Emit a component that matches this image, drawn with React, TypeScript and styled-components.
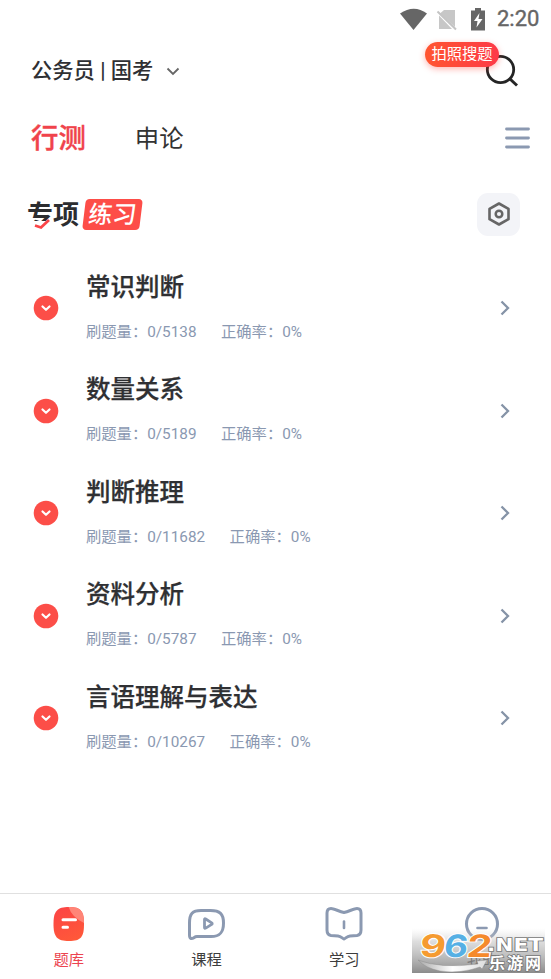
import React from 'react';
import styled, { createGlobalStyle } from 'styled-components';

const GlobalStyle = createGlobalStyle`
  * { box-sizing: border-box; }
  body { margin: 0; background: #fff; overflow: hidden; }
`;

const Screen = styled.div`
  position: relative;
  display: flex;
  flex-direction: column;
  width: 551px;
  height: 979px;
  background: #fff;
  color: #2f3033;
  font-family: Roboto, 'Noto Sans CJK SC', sans-serif;
  white-space: nowrap;
  svg { display: block; flex: none; }
`;

const StatusBar = styled.div`
  display: flex;
  align-items: center;
  justify-content: flex-end;
  height: 37px;
  padding-right: 12px;
`;

const Clock = styled.span`
  margin-left: 11px;
  padding-top: 1px;
  font-size: 22px;
  line-height: 36px;
  font-weight: 400;
  -webkit-text-stroke: 0.4px #666;
  color: #666;
  width: 42px;
`;

const Header = styled.header`
  display: flex;
  align-items: center;
  height: 67px;
  padding: 0 32px 0 31px;
`;

const ExamPicker = styled.div`
  display: flex;
  align-items: center;
  gap: 13px;
  padding-top: 1px;
  font-size: 21.3px;
  line-height: 30px;
  font-weight: 500;
`;

const SearchBox = styled.div`
  position: relative;
  margin-left: auto;
`;

const SearchTag = styled.span`
  position: absolute;
  right: 20px;
  top: -11px;
  width: 74px;
  height: 25px;
  border-radius: 13px;
  background: linear-gradient(90deg, #ff5530, #fd3a48);
  box-shadow: 0 2px 6px rgba(255, 70, 60, 0.4);
  color: #fff;
  font-size: 15.3px;
  line-height: 24px;
  text-align: center;
`;

const Tabs = styled.nav`
  display: flex;
  align-items: center;
  height: 68px;
  padding: 0 21px 0 31px;
  gap: 49px;
  svg { margin-left: auto; }
`;

const Tab = styled.span<{ $active?: boolean }>`
  padding-top: 2px;
  font-size: ${p => (p.$active ? 27.4 : 24.4)}px;
  line-height: 38px;
  font-weight: ${p => (p.$active ? 500 : 400)};
  -webkit-text-stroke: ${p => (p.$active ? '0.4px #f0434b' : '0')};
  color: ${p => (p.$active ? '#f0434b' : '#333')};
`;

const SectionHeader = styled.div`
  display: flex;
  align-items: center;
  height: 84px;
  padding: 0 31px 0 27px;
`;

const SectionTitle = styled.div`
  position: relative;
  padding-top: 2px;
  font-size: 26px;
  line-height: 34px;
  font-weight: 700;
  color: #2c2d30;
`;

const TitleAccent = styled.svg`
  position: absolute;
  left: 5px;
  top: 22px;
`;

const PracticeBadge = styled.div`
  display: grid;
  place-items: center;
  width: 57px;
  height: 31px;
  margin-left: 5px;
  border-radius: 4px;
  background: #fd4d48;
  transform: skewX(-7deg);
  color: #fff;
  font-size: 24px;
  line-height: 33px;
  font-weight: 500;
`;

const SettingsButton = styled.button`
  display: grid;
  place-items: center;
  width: 43px;
  height: 43px;
  margin-left: auto;
  padding: 0;
  border: 0;
  border-radius: 11px;
  background: #f3f4f8;
`;

const TopicList = styled.main`
  display: grid;
  grid-auto-rows: 102.5px;
  flex: 1;
  align-content: start;
`;

const TopicRow = styled.div`
  display: flex;
  align-items: center;
  padding: 2px 40px 0 33px;
`;

const TopicText = styled.div`
  flex: 1;
  margin-left: 27px;
  padding-bottom: 5px;
`;

const TopicName = styled.div`
  font-size: 24.5px;
  line-height: 36px;
  font-weight: 500;
  -webkit-text-stroke: 0.25px #2f3033;
`;

const TopicStats = styled.div`
  display: flex;
  gap: 24.5px;
  margin-top: 16px;
  font-size: 15.3px;
  line-height: 20px;
  color: #8a98b1;
`;

const BottomNav = styled.nav`
  display: grid;
  grid-template-columns: repeat(4, 1fr);
  height: 86px;
  border-top: 1px solid #e0e0e0;
`;

const NavItem = styled.div<{ $active?: boolean }>`
  display: flex;
  flex-direction: column;
  align-items: center;
  padding-top: 10px;
  gap: 5px;
  font-size: 15.3px;
  line-height: 22px;
  color: ${p => (p.$active ? '#ec4450' : '#3d3d3d')};
`;

const Watermark = styled.svg`
  position: absolute;
  left: 412px;
  top: 926px;
`;

const topics = [
  { name: '常识判断', total: 5138 },
  { name: '数量关系', total: 5189 },
  { name: '判断推理', total: 11682 },
  { name: '资料分析', total: 5787 },
  { name: '言语理解与表达', total: 10267 },
];

const StatusIcons = () => (
  <svg width="86" height="24" viewBox="0 0 86 24">
    <path d="M0 6.5Q14 -3 27 6.5L13.5 23Z" fill="#666" />
    <path d="M44 3h11v17L40 6.5zM39 8.5 52 22H39z" fill="#c7c7c7" />
    <path d="M37.5 4.5 56 22.5" stroke="#c4c4c4" strokeWidth="2" />
    <path d="M75 1h6v2.500h4V23.500H71V3.500h4z" fill="#666" />
    <path d="M79.500 6 74 14h3.500L76.500 20.500l6-8.500h-4z" fill="#fff" />
  </svg>
);

const CircleChevron = () => (
  <svg width="26" height="26" viewBox="0 0 26 26">
    <circle cx="13" cy="13" r="12.300" fill="#fc4e48" />
    <path d="m9.500 11.500 3.500 3.300 3.500-3.300" fill="none" stroke="#fff" strokeWidth="2.200" strokeLinecap="round" strokeLinejoin="round" />
  </svg>
);

const line = { fill: 'none', stroke: '#8b99b1', strokeWidth: 3, strokeLinecap: 'round', strokeLinejoin: 'round' } as const;

const BankIcon = () => (
  <svg width="40" height="40" viewBox="0 0 40 40">
    <defs>
      <linearGradient id="bank" x2="0.4" y2="1">
        <stop stopColor="#fb4147" />
        <stop offset="1" stopColor="#ff5839" />
      </linearGradient>
      <clipPath id="bankShape"><path d="M20 3C32 3 35 7 35 20S32 37 20 37 4.500 33 4.500 20 8 3 20 3Z" /></clipPath>
    </defs>
    <g clipPath="url(#bankShape)">
      <path d="M0 0h40v40H0z" fill="url(#bank)" />
      <path d="M19 0Q21 14 40 21V0Z" fill="#ff8577" />
    </g>
    <path d="M14 15.700h12.500M14 23.200h4.500" stroke="#fff" strokeWidth="3" strokeLinecap="round" />
  </svg>
);

const CourseIcon = () => (
  <svg width="40" height="40" viewBox="0 0 40 40">
    <path {...line} d="M14 6.500h9.500C33 6.500 36.500 10 36.500 19S33.500 32.500 24 32.500H10C7 32.500 6.500 35 4 34.500 2.500 34 2.500 33 2.500 31V19C2.500 9.500 5.500 6.500 14 6.500Z" />
    <path {...line} strokeWidth="2.800" d="M17.500 15.500v8q0 1.200 1.200.6l6-3.700q1-.8 0-1.500l-6-3.900q-1.200-.7-1.200.5Z" />
  </svg>
);

const StudyIcon = () => (
  <svg width="40" height="40" viewBox="0 0 40 40">
    <path {...line} d="M20 8.500C15 7.500 10 4.500 7 4.500 4 4.500 3 6 3 9V26C3 29 4 31 7 31.500L14 32C17 32.300 18 34 20 35 22 34 23 32.300 26 32L33 31.500C36 31 37 29 37 26V9C37 6 36 4.500 33 4.500 30 4.500 25 7.500 20 8.500Z" />
    <path {...line} strokeWidth="2.600" d="M20 17.500v6.500" />
  </svg>
);

const ProfileIcon = () => (
  <svg width="40" height="40" viewBox="0 0 40 40">
    <circle {...line} cx="20" cy="20" r="15.500" />
    <path {...line} strokeWidth="2.600" d="M15.500 24h9" />
  </svg>
);

const navItems = [
  { label: '题库', Icon: BankIcon, active: true },
  { label: '课程', Icon: CourseIcon },
  { label: '学习', Icon: StudyIcon },
  { label: '我的', Icon: ProfileIcon },
];

const SiteMark = () => (
  <Watermark width="135" height="48" viewBox="0 0 135 48">
    <defs>
      <linearGradient id="shade" x2="0" y2="1">
        <stop stopColor="#ddd" stopOpacity="0" />
        <stop offset="0.3" stopColor="#bbb" stopOpacity="0.5" />
        <stop offset="1" stopColor="#777" stopOpacity="0.85" />
      </linearGradient>
      <linearGradient id="swoosh"><stop stopColor="#aaa" /><stop offset="0.5" stopColor="#fff" /><stop offset="1" stopColor="#ddd" /></linearGradient>
    </defs>
    <path d="M0 2h133v45H0z" fill="url(#shade)" />
    <path d="M6 34Q28 43 66 38L65 35 75 34 70 43 68 41Q48 48 28 45 13 42 6 34Z" fill="url(#swoosh)" stroke="#888" strokeWidth=".4" />
    <g fontFamily="Inter" fontWeight="700" fontSize="31" stroke="#fff" strokeWidth="2" paintOrder="stroke" transform="translate(7 30.500) skewX(-6)">
      <text x="0" y="0" textLength="26" lengthAdjust="spacingAndGlyphs" fill="#f59b31">9</text>
      <text x="24" y="0" textLength="24" lengthAdjust="spacingAndGlyphs" fill="#56b0e4">6</text>
      <text x="47" y="0" textLength="25" lengthAdjust="spacingAndGlyphs" fill="#f58a2c">2</text>
    </g>
    <g fill="#fff" stroke="#777" strokeWidth="1.600" paintOrder="stroke" fontWeight="700">
      <text x="75" y="25" fontFamily="DejaVu Sans" fontSize="18" textLength="56" lengthAdjust="spacingAndGlyphs">.NET</text>
      <text x="77" y="43" fontFamily="Noto Sans CJK SC" fontSize="16" textLength="52">乐游网</text>
    </g>
  </Watermark>
);

export default function App() {
  return (
    <Screen>
      <GlobalStyle />
      <StatusBar>
        <StatusIcons />
        <Clock>2:20</Clock>
      </StatusBar>
      <Header>
        <ExamPicker>
          公务员 | 国考
          <svg width="14" height="9" viewBox="0 0 14 9">
            <path d="m1.500 1.500 5.500 5.500 5.500-5.500" fill="none" stroke="#666" strokeWidth="1.800" />
          </svg>
        </ExamPicker>
        <SearchBox>
          <svg width="36" height="36" viewBox="0 0 36 36">
            <circle cx="17.500" cy="16.500" r="13.200" fill="none" stroke="#252525" strokeWidth="2.800" />
            <path d="m27 26 7 6.500" stroke="#252525" strokeWidth="3" />
          </svg>
          <SearchTag>拍照搜题</SearchTag>
        </SearchBox>
      </Header>
      <Tabs>
        <Tab $active>行测</Tab>
        <Tab>申论</Tab>
        <svg width="25" height="24" viewBox="0 0 25 24">
          <path d="M1.500 3h22M1.500 12h22M1.500 21h22" {...line} strokeWidth="2.800" />
        </svg>
      </Tabs>
      <SectionHeader>
        <SectionTitle>
          专项
          <TitleAccent width="20" height="13" viewBox="0 0 20 13">
            <path d="M0 3h19v10H0z" fill="#fff" />
            <path d="M17 2 9 9.500 3 7.500" stroke="#fb4548" strokeWidth="2.800" fill="none" />
          </TitleAccent>
        </SectionTitle>
        <PracticeBadge>练习</PracticeBadge>
        <SettingsButton aria-label="设置">
          <svg width="24" height="26" viewBox="0 0 24 26">
            <path d="M12 2.500 21.500 7.800v10.400L12 23.500 2.500 18.200V7.800Z" fill="none" stroke="#666" strokeWidth="2.600" strokeLinejoin="round" />
            <circle cx="12" cy="13" r="3.300" fill="none" stroke="#666" strokeWidth="2.500" />
          </svg>
        </SettingsButton>
      </SectionHeader>
      <TopicList>
        {topics.map(t => (
          <TopicRow key={t.name}>
            <CircleChevron />
            <TopicText>
              <TopicName>{t.name}</TopicName>
              <TopicStats>
                <span>刷题量：0/{t.total}</span>
                <span>正确率：0%</span>
              </TopicStats>
            </TopicText>
            <svg width="12" height="18" viewBox="0 0 12 18">
              <path d="m2.500 2.500 6.500 6.500-6.500 6.500" fill="none" stroke="#8593a7" strokeWidth="2.300" />
            </svg>
          </TopicRow>
        ))}
      </TopicList>
      <BottomNav>
        {navItems.map(({ label, Icon, active }) => (
          <NavItem key={label} $active={active}>
            <Icon />
            {label}
          </NavItem>
        ))}
      </BottomNav>
      <SiteMark />
    </Screen>
  );
}
